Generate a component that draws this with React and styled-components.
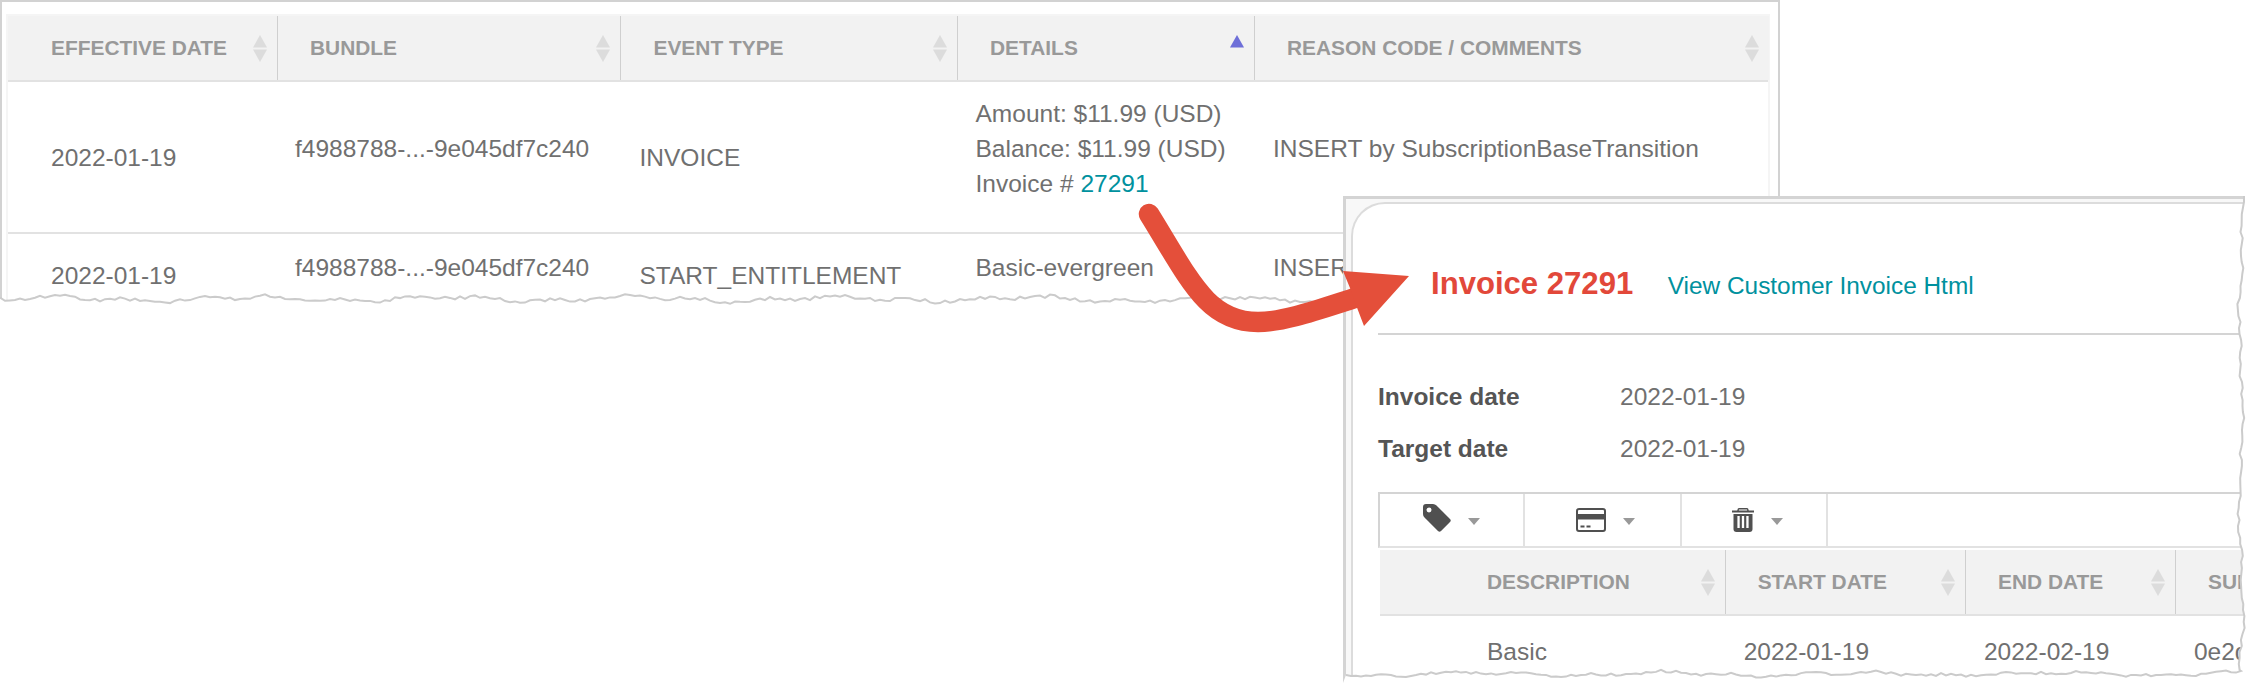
import React from "react";
import styled, { createGlobalStyle } from "styled-components";

const Global = createGlobalStyle`
  html, body { margin: 0; padding: 0; background: #fff; }
  body { font-family: "Liberation Sans", Arial, sans-serif; color: #707070; }
  * { box-sizing: border-box; }
`;

const Stage = styled.div`
  position: relative;
  width: 2247px;
  height: 683px;
  overflow: hidden;
  background: #fff;
`;

const Sheet = styled.div`
  width: 1780px;
  height: 310px;
  border: 2px solid #d2d2d2;
  border-bottom: 0;
  padding: 12px 8px 0 4px;
  overflow: hidden;
`;

const TableFrame = styled.div`
  border: 2px solid #f5f5f5;
  border-bottom: 0;
`;

const Row = styled.div`
  display: grid;
  grid-template-columns: ${(p) => p.$cols};
  height: ${(p) => p.$height}px;
  border-bottom: ${(p) => (p.$last ? "0" : "2px solid #e2e2e2")};
`;

const HeadCell = styled.div`
  display: flex;
  align-items: center;
  height: 100%;
  padding-left: ${(p) => p.$pad}px;
  padding-right: 10px;
  background: #f2f2f2;
  border-right: ${(p) => (p.$last ? "0" : "1.5px solid #cfcfcf")};
  font-size: 20.9px;
  font-weight: 700;
  color: #999;
  white-space: nowrap;
  overflow: hidden;
`;

const SortSvg = styled.svg`
  flex: none;
  margin-left: auto;
  width: 14px;
  height: 27px;
`;

const Cell = styled.div`
  display: flex;
  flex-direction: column;
  justify-content: center;
  padding-left: ${(p) => p.$pad}px;
  padding-top: ${(p) => (p.$low ? 2 : 0)}px;
  padding-bottom: ${(p) => (p.$raised ? 15 : 0)}px;
  font-size: 24.5px;
  line-height: 34.7px;
  color: #707070;
  white-space: nowrap;
`;

const Link = styled.a`
  color: #00919e;
  text-decoration: none;
`;

const Popup = styled.div`
  position: absolute;
  left: 1343px;
  top: 196px;
  width: 904px;
  height: 487px;
`;

const PopupFrame = styled.div`
  width: 100%;
  height: 100%;
  border-top: 3px solid #d4d4d4;
  border-left: 3px solid #d4d4d4;
  background: #f8f8f8;
  padding: 3px 0 0 5px;
  overflow: hidden;
`;

const Panel = styled.div`
  height: 100%;
  background: #fff;
  border-top: 2px solid #dcdcdc;
  border-left: 2px solid #dcdcdc;
  border-top-left-radius: 34px;
  padding-left: 25px;
`;

const TitleBar = styled.div`
  display: flex;
  align-items: baseline;
  gap: 34.5px;
  height: 131px;
  padding: 62px 0 0 53px;
  border-bottom: 2px solid #d4d4d4;
`;

const Title = styled.h1`
  margin: 0;
  font-size: 31.1px;
  line-height: 36px;
  font-weight: 700;
  color: #e2483a;
`;

const TitleLink = styled(Link)`
  font-size: 24.4px;
`;

const Facts = styled.div`
  display: grid;
  grid-template-columns: 242px 1fr;
  grid-auto-rows: 52px;
  align-items: center;
  padding-top: 36px;
  font-size: 24.5px;
  height: 157px;
`;

const FactLabel = styled.div`
  font-weight: 700;
  color: #555;
`;

const FactValue = styled.div`
  color: #707070;
`;

const Toolbar = styled.div`
  display: flex;
  height: 56px;
  border-top: 2px solid #d4d4d4;
  border-left: 2px solid #d4d4d4;
  border-bottom: 2px solid #e2e2e2;
`;

const ToolButton = styled.div`
  display: flex;
  align-items: center;
  gap: 17px;
  width: ${(p) => p.$w}px;
  padding-left: ${(p) => p.$pad}px;
  border-right: 2px solid #e2e2e2;
`;

const Caret = styled.span`
  width: 0;
  height: 0;
  margin-top: 3px;
  border-left: 6.5px solid transparent;
  border-right: 6.5px solid transparent;
  border-top: 7.5px solid #999;
`;

const IconSvg = styled.svg`
  flex: none;
  display: block;
  margin-bottom: ${(p) => p.$lift}px;
`;

const InnerTable = styled.div`
  margin-top: 2px;
  margin-left: 2px;
  width: 1000px;
`;

const TornSvg = styled.svg`
  position: absolute;
  left: ${(p) => p.$x}px;
  top: ${(p) => p.$y}px;
  pointer-events: none;
`;

const ArrowSvg = styled.svg`
  position: absolute;
  left: 1130px;
  top: 200px;
`;

function noise(seed) {
  const v = Math.sin(seed * 127.1 + 11.7) * 43758.5453;
  return v - Math.floor(v);
}

function wave(len, seed, amp, step = 5) {
  const out = [];
  for (let i = 0; i <= len; i += step) {
    const s =
      Math.sin(i / 31 + seed) * 0.45 +
      Math.sin(i / 11.3 + seed * 2) * 0.3 +
      (noise(i + seed) - 0.5) * 0.75;
    out.push([i, s * amp]);
  }
  return out;
}

function BottomTear() {
  const pts = wave(1345, 3, 4.5);
  const base = 14;
  const line = pts.map(([x, d]) => `${x},${(base + d).toFixed(1)}`).join(" ");
  return (
    <TornSvg $x={0} $y={285} width="1345" height="40" viewBox="0 0 1345 40">
      <polygon points={`${line} 1345,40 0,40`} fill="#fff" />
      <polyline points={line} fill="none" stroke="#cbcbcb" strokeWidth="2" />
    </TornSvg>
  );
}

function PopupTear() {
  const right = wave(478, 7, 3.5, 6).map(([y, d]) => [898 + d, y]);
  const bottom = wave(898, 5, 3.8)
    .map(([x, d]) => [898 - x, 478 + d]);
  const all = [...right, ...bottom];
  const line = all.map(([x, y]) => `${x.toFixed(1)},${y.toFixed(1)}`).join(" ");
  return (
    <TornSvg $x={0} $y={0} width="904" height="487" viewBox="0 0 904 487">
      <polygon points={`${line} 0,487 904,487 904,0`} fill="#fff" />
      <polyline points={line} fill="none" stroke="#cbcbcb" strokeWidth="2" />
    </TornSvg>
  );
}

function SortIcon({ active }) {
  return (
    <SortSvg viewBox="0 0 14 27">
      <polygon points="7,0 14,12.5 0,12.5" fill={active ? "#6e6fd8" : "#dcdcdc"} />
      {!active && <polygon points="0,14.5 14,14.5 7,27" fill="#dcdcdc" />}
    </SortSvg>
  );
}

function Arrow() {
  return (
    <ArrowSvg width="290" height="140" viewBox="1130 200 290 140">
      <path
        d="M1149 214 C1190 280 1207 322 1258 322 C1285 322 1320 309 1358 297"
        fill="none"
        stroke="#e44f3a"
        strokeWidth="20.5"
        strokeLinecap="round"
      />
      <polygon points="1343,271 1409,276 1364,326 1356,305 1350,288" fill="#e44f3a" />
    </ArrowSvg>
  );
}

function TagIcon() {
  return (
    <IconSvg $lift={4} width="28" height="28" viewBox="0 0 28 28">
      <path
        fillRule="evenodd"
        fill="#505050"
        d="M3 0 H10 Q12 0 13.5 1.5 L27 15 Q28.5 16.5 27 18 L18 27 Q16.5 28.5 15 27 L1.5 13.5 Q0 12 0 10 V3 Q0 0 3 0 Z M6 3.5 A2.5 2.5 0 1 0 6.01 8.5 A2.5 2.5 0 1 0 6 3.5 Z"
      />
    </IconSvg>
  );
}

function CardIcon() {
  return (
    <IconSvg $lift={0} width="30" height="24" viewBox="0 0 30 24">
      <rect x="1" y="1" width="28" height="22" rx="2" fill="#fff" stroke="#505050" strokeWidth="2" />
      <rect x="1" y="6" width="28" height="5.5" fill="#505050" />
      <rect x="4.5" y="17.5" width="4" height="2" fill="#505050" />
      <rect x="10.5" y="17.5" width="4" height="2" fill="#505050" />
    </IconSvg>
  );
}

function TrashIcon() {
  return (
    <IconSvg $lift={0} width="22" height="24" viewBox="0 0 22 24">
      <path
        fill="#505050"
        d="M7 0 H15 Q16.5 0 16.8 2.5 H22 V4.6 H0 V2.5 H5.2 Q5.5 0 7 0 Z M7 1.5 L6.8 2.5 H15.2 L15 1.5 Z"
      />
      <path fill="#505050" d="M1.5 6 H20.5 V21 Q20.5 24 17.5 24 H4.5 Q1.5 24 1.5 21 Z" />
      <rect x="5.4" y="8" width="2.3" height="12" fill="#fff" />
      <rect x="9.85" y="8" width="2.3" height="12" fill="#fff" />
      <rect x="14.3" y="8" width="2.3" height="12" fill="#fff" />
    </IconSvg>
  );
}

const topCols = "270px 342.5px 337px 297.5px 514px";
const popCols = "345.7px 240.3px 210px 204px";

function TimelineSheet() {
  return (
    <Sheet>
      <TableFrame>
        <Row $cols={topCols} $height={66}>
          <HeadCell $pad={43}>EFFECTIVE DATE<SortIcon /></HeadCell>
          <HeadCell $pad={32}>BUNDLE<SortIcon /></HeadCell>
          <HeadCell $pad={33}>EVENT TYPE<SortIcon /></HeadCell>
          <HeadCell $pad={32.5}>DETAILS<SortIcon active /></HeadCell>
          <HeadCell $pad={32} $last>REASON CODE / COMMENTS<SortIcon /></HeadCell>
        </Row>
        <Row $cols={topCols} $height={152}>
          <Cell $pad={43} $low>2022-01-19</Cell>
          <Cell $pad={17} $raised>f4988788-...-9e045df7c240</Cell>
          <Cell $pad={19} $low>INVOICE</Cell>
          <Cell $pad={18} $raised>
            <div>Amount: $11.99 (USD)</div>
            <div>Balance: $11.99 (USD)</div>
            <div>Invoice # <Link>27291</Link></div>
          </Cell>
          <Cell $pad={18} $raised>INSERT by SubscriptionBaseTransition</Cell>
        </Row>
        <Row $cols={topCols} $height={83} $last>
          <Cell $pad={43} $low>2022-01-19</Cell>
          <Cell $pad={17} $raised>f4988788-...-9e045df7c240</Cell>
          <Cell $pad={19} $low>START_ENTITLEMENT</Cell>
          <Cell $pad={18} $raised>Basic-evergreen</Cell>
          <Cell $pad={18} $raised>INSERT by SubscriptionBaseTransition</Cell>
        </Row>
      </TableFrame>
    </Sheet>
  );
}

function InvoiceWindow() {
  return (
    <Popup>
      <PopupFrame>
        <Panel>
          <TitleBar>
            <Title>Invoice 27291</Title>
            <TitleLink>View Customer Invoice Html</TitleLink>
          </TitleBar>
          <Facts>
            <FactLabel>Invoice date</FactLabel>
            <FactValue>2022-01-19</FactValue>
            <FactLabel>Target date</FactLabel>
            <FactValue>2022-01-19</FactValue>
          </Facts>
          <Toolbar>
            <ToolButton $w={145} $pad={43}><TagIcon /><Caret /></ToolButton>
            <ToolButton $w={157} $pad={51}><CardIcon /><Caret /></ToolButton>
            <ToolButton $w={146} $pad={50}><TrashIcon /><Caret /></ToolButton>
          </Toolbar>
          <InnerTable>
            <Row $cols={popCols} $height={66}>
              <HeadCell $pad={107}>DESCRIPTION<SortIcon /></HeadCell>
              <HeadCell $pad={32}>START DATE<SortIcon /></HeadCell>
              <HeadCell $pad={32}>END DATE<SortIcon /></HeadCell>
              <HeadCell $pad={32} $last>SUBSCRIPTION</HeadCell>
            </Row>
            <Row $cols={popCols} $height={72} $last>
              <Cell $pad={107}>Basic</Cell>
              <Cell $pad={18}>2022-01-19</Cell>
              <Cell $pad={18}>2022-02-19</Cell>
              <Cell $pad={18}>0e2d41a7</Cell>
            </Row>
          </InnerTable>
        </Panel>
      </PopupFrame>
      <PopupTear />
    </Popup>
  );
}

export default function App() {
  return (
    <Stage>
      <Global />
      <TimelineSheet />
      <BottomTear />
      <InvoiceWindow />
      <Arrow />
    </Stage>
  );
}
